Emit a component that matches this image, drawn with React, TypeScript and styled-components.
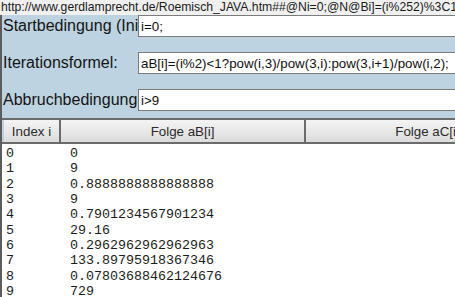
import React from 'react';
import styled, { createGlobalStyle } from 'styled-components';

const GlobalStyle = createGlobalStyle`
  html, body {
    margin: 0;
    padding: 0;
    background: #ffffff;
    overflow: hidden;
  }
`;

const Page = styled.div`
  width: 455px;
  height: 297px;
  overflow: hidden;
  font-family: "Liberation Sans", Arial, sans-serif;
`;

const UrlBar = styled.div`
  height: 15px;
  line-height: 15px;
  padding-left: 1px;
  background: #f0f0f0;
  color: #1a1a1a;
  font-size: 12.2px;
  white-space: nowrap;
  overflow: hidden;
`;

const Frame = styled.div`
  border-left: 2px solid #5c5c5c;
  background: #bdd3e1;
  height: 282px;
  display: flex;
  flex-direction: column;
`;

const Form = styled.div`
  display: flex;
  flex-direction: column;
  gap: 15px;
`;

const FieldRow = styled.div`
  display: flex;
  align-items: center;
  height: 22px;
`;

const Label = styled.div`
  width: 135px;
  flex: none;
  overflow: hidden;
  white-space: nowrap;
  padding-left: 1px;
  font-size: 16px;
  color: #141414;
`;

const Input = styled.input`
  flex: none;
  width: 340px;
  height: 22px;
  box-sizing: border-box;
  border: 1px solid #7b7b7b;
  background: #ffffff;
  padding: 0 2px;
  font-family: "Liberation Sans", Arial, sans-serif;
  font-size: 13.33px;
  color: #111111;
  outline: none;
`;

const Table = styled.div`
  margin-top: 7px;
  flex: 1;
  display: flex;
  flex-direction: column;
  background: #ffffff;
  border-top: 2px solid #6b6b6b;
`;

const HeaderRow = styled.div`
  display: flex;
  height: 22px;
  border-bottom: 2px solid #6b6b6b;
  background: #bdd3e1;
`;

const HeaderCell = styled.div<{ $first?: boolean }>`
  flex: none;
  width: ${({ $first }) => ($first ? 57 : 245)}px;
  box-sizing: border-box;
  margin-left: ${({ $first }) => ($first ? 2 : 0)}px;
  border-right: 2px solid #6b6b6b;
  background: linear-gradient(#f4f4f4, #dcdcdc);
  display: flex;
  align-items: center;
  justify-content: center;
  font-size: 13.33px;
  color: #2a2a2a;
  white-space: nowrap;
  overflow: hidden;
`;

const Values = styled.pre`
  margin: 0;
  padding: 2px 0 0 4px;
  font-family: "Liberation Mono", "Courier New", monospace;
  font-size: 13.33px;
  line-height: 15.33px;
  color: #1c1c1c;
  tab-size: 8;
`;

const url =
  'http://www.gerdlamprecht.de/Roemisch_JAVA.htm##@Ni=0;@N@Bi]=(i%252)%3C1?pow(i,3)/pow(3,i):pow(3,i%2B1)/pow(i,2);';

const fields = [
  { label: 'Startbedingung (Initialisierung):', value: 'i=0;' },
  { label: 'Iterationsformel:', value: 'aB[i]=(i%2)<1?pow(i,3)/pow(3,i):pow(3,i+1)/pow(i,2);' },
  { label: 'Abbruchbedingung', value: 'i>9' },
];

const rows = [
  '0',
  '9',
  '0.8888888888888888',
  '9',
  '0.7901234567901234',
  '29.16',
  '0.2962962962962963',
  '133.89795918367346',
  '0.07803688462124676',
  '729',
];

export default function App() {
  return (
    <Page>
      <GlobalStyle />
      <UrlBar>{url}</UrlBar>
      <Frame>
        <Form>
          {fields.map((f) => (
            <FieldRow key={f.label}>
              <Label>{f.label}</Label>
              <Input defaultValue={f.value} />
            </FieldRow>
          ))}
        </Form>
        <Table>
          <HeaderRow>
            <HeaderCell $first>Index i</HeaderCell>
            <HeaderCell>Folge aB[i]</HeaderCell>
            <HeaderCell>Folge aC[i]</HeaderCell>
          </HeaderRow>
          <Values>{rows.map((v, i) => `${i}\t${v}`).join('\n')}</Values>
        </Table>
      </Frame>
    </Page>
  );
}
